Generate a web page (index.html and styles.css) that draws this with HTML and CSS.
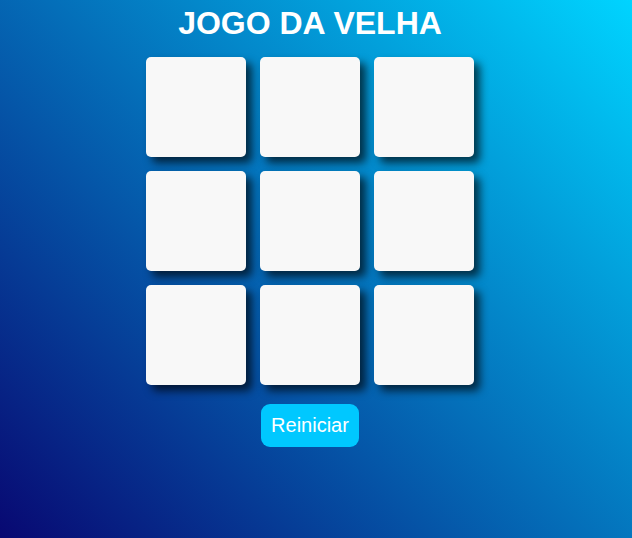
FILE: index.html
```html
<!DOCTYPE html>
<html lang="pt">
<head>
<meta charset="utf-8">
<title>Jogo da Velha</title>
<link rel="stylesheet" href="styles.css">
</head>
<body>
<main class="game">
  <h1 class="title">JOGO DA VELHA</h1>
  <div class="board">
    <div class="cell"></div>
    <div class="cell"></div>
    <div class="cell"></div>
    <div class="cell"></div>
    <div class="cell"></div>
    <div class="cell"></div>
    <div class="cell"></div>
    <div class="cell"></div>
    <div class="cell"></div>
  </div>
  <button class="reset">Reiniciar</button>
</main>
</body>
</html>
```
FILE: styles.css
```css
html, body {
  margin: 0;
  height: 100%;
}
body {
  background: linear-gradient(45deg, #080872 0%, #00d4ff 100%);
  font-family: "Liberation Sans", Arial, sans-serif;
  color: #fff;
}
.game {
  display: flex;
  flex-direction: column;
  align-items: center;
  padding-right: 12px;
  padding-top: 5px;
}
.title {
  margin: 0;
  font-size: 32px;
  font-weight: bold;
  line-height: 37px;
}
.board {
  margin-top: 15px;
  display: grid;
  grid-template-columns: repeat(3, 100px);
  grid-auto-rows: 100px;
  gap: 14px;
}
.cell {
  background: #f8f8f8;
  border-radius: 5px;
  box-shadow: 6px 6px 8px rgba(0, 0, 0, 0.65);
}
.reset {
  margin-top: 19px;
  width: 98px;
  height: 43px;
  border: none;
  border-radius: 9px;
  background: #00c8ff;
  color: #fff;
  font-family: "Liberation Sans", Arial, sans-serif;
  font-size: 20px;
  padding: 0;
}
```
